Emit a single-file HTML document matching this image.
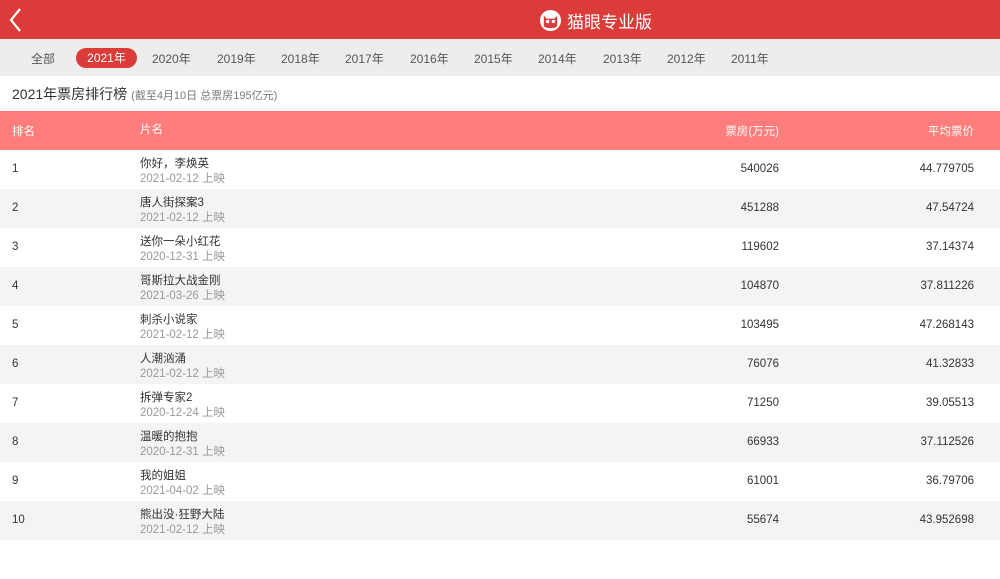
<!DOCTYPE html>
<html><head><meta charset="utf-8"><style>
*{margin:0;padding:0;box-sizing:border-box}
body{width:1000px;height:546px;overflow:hidden;background:#fff;font-family:"Liberation Sans","Noto Sans CJK SC",sans-serif;color:#333}
.hd{height:39px;background:#db3c3a;position:relative}
.hd .back{position:absolute;left:7px;top:7px}
.logo{position:absolute;left:539px;top:8px;display:flex;align-items:center;color:#fff;font-size:17px}
.tabs{height:37px;background:#ededed;position:relative;font-size:12px;color:#555}
.tabs span{position:absolute;top:11px}
.tabs .on{background:#db3c3a;color:#fff;border-radius:10px;height:20px;line-height:20px;top:9px;width:61px;text-align:center}
.tt{height:35px;line-height:36px;padding-left:12px;font-size:14px;color:#333}
.tt small{font-size:11px;color:#777;margin-left:4px}
.row{height:39px;position:relative;font-size:11.5px}
.th{background:#ff7d7b;color:#fff}
.row:nth-child(even){background:#f4f4f4}
.c1{position:absolute;left:12px;top:13px}
.c2{position:absolute;left:140px;top:7px;line-height:15px}
.c2 i{font-style:normal;color:#999;display:block}
.c3{position:absolute;right:221px;top:13px}
.c4{position:absolute;right:26px;top:13px}
.th .c2{top:12px}
.th .c1,.th .c3,.th .c4{top:12px}
</style></head><body>
<div class="hd">
<svg class="back" width="16" height="26" viewBox="0 0 16 26"><path d="M13 2L4 13l9 11" stroke="#fff" stroke-width="2.2" fill="none"/></svg>
<div class="logo"><svg width="23" height="23" viewBox="0 0 24 24"><circle cx="12" cy="12" r="11" fill="#fff"/><path d="M5 17V7l3 3h8l3-3v10c0 2-3 3-7 3s-7-1-7-3z" fill="#db3c3a"/><circle cx="9" cy="13" r="1.8" fill="#fff"/><circle cx="15" cy="13" r="1.8" fill="#fff"/></svg><span style="margin-left:5px">猫眼专业版</span></div>
</div>
<div class="tabs">
<span style="left:31px">全部</span><span class="on" style="left:76px">2021年</span><span style="left:152px">2020年</span><span style="left:217px">2019年</span><span style="left:281px">2018年</span><span style="left:345px">2017年</span><span style="left:410px">2016年</span><span style="left:474px">2015年</span><span style="left:538px">2014年</span><span style="left:603px">2013年</span><span style="left:667px">2012年</span><span style="left:731px">2011年</span>
</div>
<div class="tt">2021年票房排行榜<small>(截至4月10日 总票房195亿元)</small></div>
<div>
<div class="row th"><span class="c1">排名</span><span class="c2">片名</span><span class="c3">票房(万元)</span><span class="c4">平均票价</span></div>
</div>
<div>
<div class="row"><span class="c1">1</span><span class="c2">你好，李焕英<i>2021-02-12 上映</i></span><span class="c3">540026</span><span class="c4">44.779705</span></div>
<div class="row"><span class="c1">2</span><span class="c2">唐人街探案3<i>2021-02-12 上映</i></span><span class="c3">451288</span><span class="c4">47.54724</span></div>
<div class="row"><span class="c1">3</span><span class="c2">送你一朵小红花<i>2020-12-31 上映</i></span><span class="c3">119602</span><span class="c4">37.14374</span></div>
<div class="row"><span class="c1">4</span><span class="c2">哥斯拉大战金刚<i>2021-03-26 上映</i></span><span class="c3">104870</span><span class="c4">37.811226</span></div>
<div class="row"><span class="c1">5</span><span class="c2">刺杀小说家<i>2021-02-12 上映</i></span><span class="c3">103495</span><span class="c4">47.268143</span></div>
<div class="row"><span class="c1">6</span><span class="c2">人潮汹涌<i>2021-02-12 上映</i></span><span class="c3">76076</span><span class="c4">41.32833</span></div>
<div class="row"><span class="c1">7</span><span class="c2">拆弹专家2<i>2020-12-24 上映</i></span><span class="c3">71250</span><span class="c4">39.05513</span></div>
<div class="row"><span class="c1">8</span><span class="c2">温暖的抱抱<i>2020-12-31 上映</i></span><span class="c3">66933</span><span class="c4">37.112526</span></div>
<div class="row"><span class="c1">9</span><span class="c2">我的姐姐<i>2021-04-02 上映</i></span><span class="c3">61001</span><span class="c4">36.79706</span></div>
<div class="row"><span class="c1">10</span><span class="c2">熊出没·狂野大陆<i>2021-02-12 上映</i></span><span class="c3">55674</span><span class="c4">43.952698</span></div>
<div class="row"></div>
</div>
</body></html>
